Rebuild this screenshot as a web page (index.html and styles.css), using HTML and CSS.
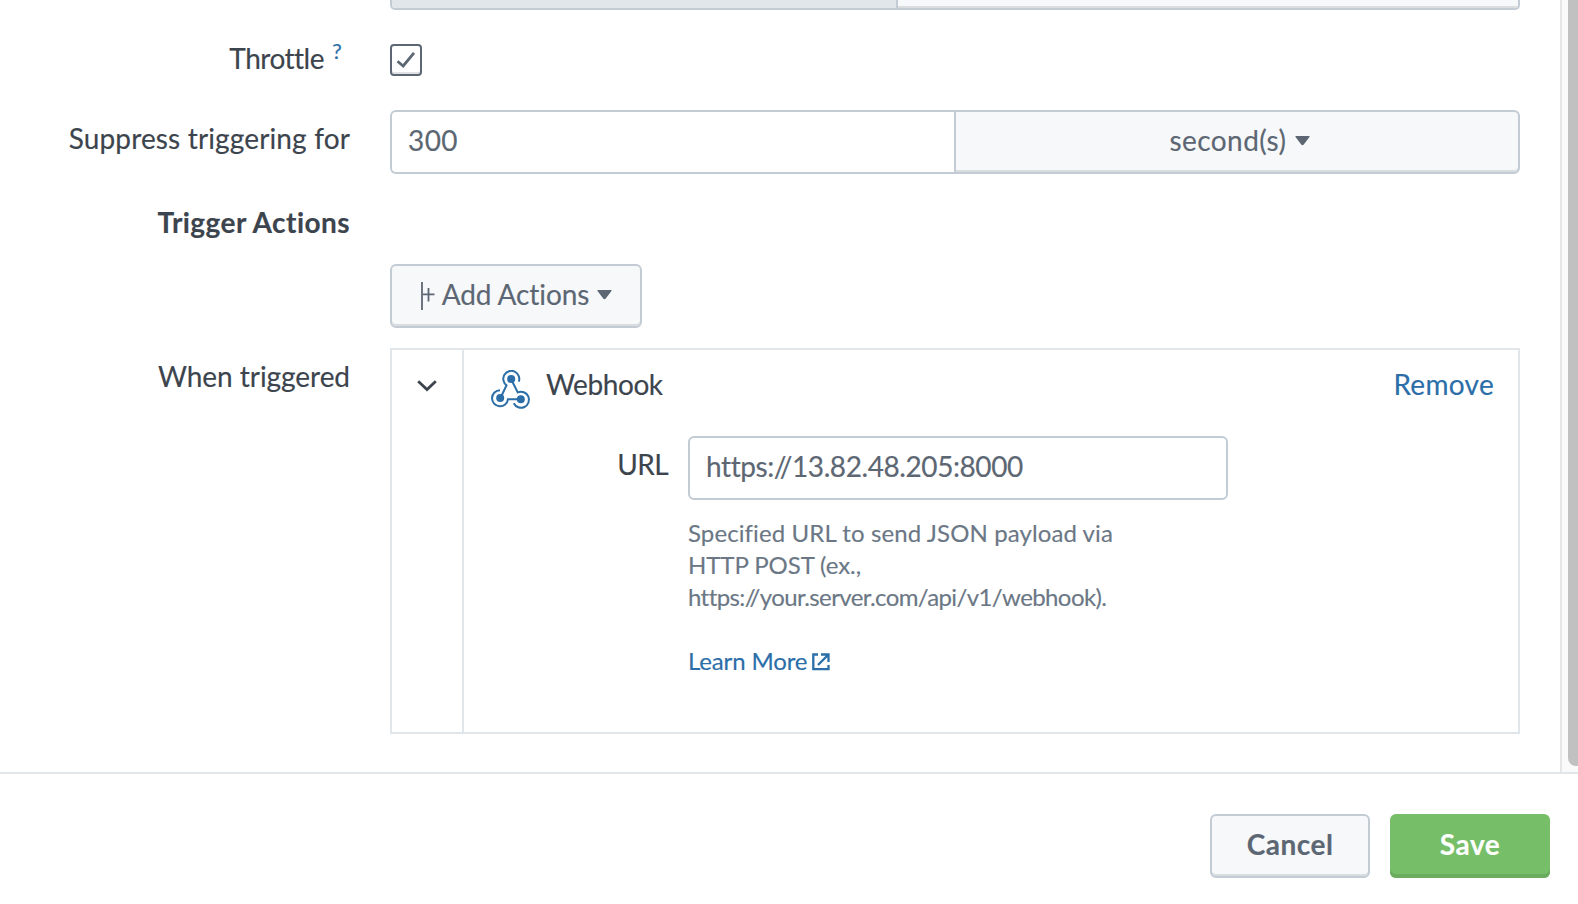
FILE: index.html
```html
<!DOCTYPE html>
<html lang="en">
<head>
<meta charset="utf-8">
<title>Save As Alert</title>
<link rel="stylesheet" href="styles.css">
</head>
<body>
<div class="dialog">
  <div class="dialog-body">
    <form class="form">
      <div class="row row-cut">
        <div class="label"></div>
        <div class="split"><div class="cell-muted"></div><div class="cell-button"></div></div>
      </div>
      <div class="row row-throttle">
        <div class="label label-help"><span class="t-throttle">Throttle</span><a class="help-mark">?</a></div>
        <div class="checkbox">
          <svg width="28" height="28" viewBox="0 0 28 28"><path d="M5.5 15.2l5.7 4.8L22 6.8" fill="none" stroke="#5c6773" stroke-width="2.8"/></svg>
        </div>
      </div>
      <div class="row">
        <div class="label"><span class="t-suppress">Suppress triggering for</span></div>
        <div class="split-input">
          <div class="input input-left"><span class="t-num">300</span></div>
          <div class="select"><span class="t-sec">second(s)</span>
            <svg class="caret" width="15" height="10" viewBox="0 0 14 10" preserveAspectRatio="none"><path d="M1 0H13Q14.300 0 13.500 1L8.200 8.600Q7 9.800 5.800 8.600L.5 1Q-.300 0 1 0Z" fill="#5c6773"/></svg>
          </div>
        </div>
      </div>
      <div class="row row-heading">
        <div class="label label-bold"><span class="t-trigger">Trigger Actions</span></div>
      </div>
      <div class="row">
        <div class="label"></div>
        <div class="button button-add">
          <svg class="add-icon" width="14" height="28" viewBox="0 0 14 28"><path d="M1 0v28M2 12.300h11.500M7.500 6v13.500" fill="none" stroke="#5c6773" stroke-width="1.800"/></svg>
          <span class="t-add">Add Actions</span>
          <svg class="caret" width="15" height="10" viewBox="0 0 14 10" preserveAspectRatio="none"><path d="M1 0H13Q14.300 0 13.500 1L8.200 8.600Q7 9.800 5.800 8.600L.5 1Q-.300 0 1 0Z" fill="#5c6773"/></svg>
        </div>
      </div>
      <div class="row">
        <div class="label"><span class="t-when">When triggered</span></div>
        <div class="panel">
          <div class="panel-toggle">
            <svg width="20" height="12" viewBox="0 0 20 12"><path d="M1.200 1.200L10 9.500l8.800-8.300" fill="none" stroke="#3c444d" stroke-width="2.800"/></svg>
          </div>
          <div class="panel-main">
            <div class="panel-head">
              <svg class="hook" width="40" height="40" viewBox="0 0 40 40">
                <g fill="none" stroke="#2b6ea8" stroke-width="2">
                  <path d="M27.800 11.600A8 8 0 1 0 15.500 15.300L9.500 28"/>
                  <path d="M9 20.300A8 8 0 1 0 17 29.200H30"/>
                  <path d="M22.800 33.200A8 8 0 1 0 26.800 22.400L20 9"/>
                </g>
                <g fill="#2b6ea8"><circle cx="20.200" cy="9" r="4"/><circle cx="9.200" cy="28" r="4"/><circle cx="29.800" cy="29.200" r="4"/></g>
              </svg>
              <span class="t-hook">Webhook</span>
              <a class="link remove">Remove</a>
            </div>
            <div class="field">
              <div class="field-label"><span class="t-url">URL</span></div>
              <div class="field-body">
                <div class="input input-url"><span class="t-addr">https://13.82.48.205:8000</span></div>
                <div class="hint">
                  <div class="h1">Specified URL to send JSON payload via</div>
                  <div class="h2">HTTP POST (ex.,</div>
                  <div class="h3">https://your.server.com/api/v1/webhook).</div>
                </div>
                <a class="link learn"><span>Learn More</span>
                  <svg width="18" height="18" viewBox="0 0 18 18"><path d="M6 1.500H1.300v14.700h15.200V12M9 1.500h7.500V9M16 2L6 12" fill="none" stroke="#2b6ea8" stroke-width="2.300"/></svg>
                </a>
              </div>
            </div>
          </div>
        </div>
      </div>
    </form>
    <div class="scrollbar"><div class="thumb"></div></div>
  </div>
  <div class="footer">
    <div class="button button-cancel"><span class="t-cancel">Cancel</span></div>
    <div class="button button-save"><span class="t-save">Save</span></div>
  </div>
</div>
</body>
</html>
```

FILE: styles.css
```css
* { box-sizing: border-box; }
body {
  margin: 0;
  background: #fff;
  color: #3c444d;
  font: 28px/36px Lato, "Liberation Sans", sans-serif;
  font-variant-ligatures: none;
  -webkit-text-stroke: .15px currentColor;
  overflow: hidden;
}
svg { display: block; flex: none; }
span { white-space: nowrap; }
.dialog { width: 1578px; height: 904px; display: flex; flex-direction: column; }
.dialog-body { display: flex; height: 772px; }
.form { width: 1560px; display: flex; flex-direction: column; gap: 20px; }
.row { display: flex; gap: 40px; align-items: flex-start; }
.row-throttle { height: 60px; }
.row-heading { height: 50px; }
.label { width: 350px; padding-top: 10px; display: flex; justify-content: flex-end; }
.label-bold { font-weight: 700; }
.row-cut { height: 10px; }
.row-cut .label { padding: 0; }
.split {
  display: flex;
  width: 1130px;
  height: 10px;
  border: 2px solid #c3cbd4;
  border-top: 0;
  border-radius: 0 0 5px 5px;
  overflow: hidden;
}
.cell-muted { width: 506px; background: #e1e6eb; border-right: 2px solid #c3cbd4; }
.cell-button { flex: 1; background: #f7f8fa; box-shadow: inset 0 -2px #d9dde0; }
.label-help { padding-right: 8px; gap: 8px; }
.help-mark { font-size: 22px; line-height: 21px; color: #2b6ea8; width: 10px; }
.checkbox {
  width: 32px;
  height: 32px;
  margin-top: 14px;
  border: 2px solid #5c6773;
  border-radius: 4px;
  box-shadow: inset 0 -2px #dfe1e3;
}
.split-input { display: flex; width: 1130px; }
.input, .select, .button {
  height: 64px;
  border: 2px solid #c3cbd4;
  border-radius: 6px;
  line-height: 36px;
  padding-top: 10px;
  color: #5c6773;
}
.input { padding-left: 16px; background: #fff; }
.input-left { width: 564px; border-right: 0; border-radius: 6px 0 0 6px; }
.select {
  display: flex;
  justify-content: center;
  gap: 9px;
  width: 566px;
  padding-left: 6px;
  border-radius: 0 6px 6px 0;
  background: #f7f8fa;
  box-shadow: inset 0 -2px #d9dde0;
}
.caret { margin-top: 14px; }
.button {
  display: flex;
  justify-content: center;
  background: #f7f8fa;
  box-shadow: inset 0 -2px #d9dde0;
}
.button-add { width: 252px; gap: 8px; padding-left: 1px; }
.button-add .add-icon { margin: 6px -1px 0 0; }
.panel { display: flex; width: 1130px; height: 386px; border: 2px solid #e1e6eb; }
.panel-toggle { width: 72px; border-right: 2px solid #e1e6eb; padding: 30px 0 0 25px; }
.panel-main { flex: 1; padding-top: 16px; }
.panel-head { display: flex; height: 34px; padding: 0 24px 0 27px; }
.hook { margin: 4px 15px 0 0; }
.link { color: #2b6ea8; }
.remove { margin-left: auto; letter-spacing: .3px; }
.field { display: flex; gap: 20px; margin-top: 36px; }
.field-label { width: 204px; padding-top: 10px; text-align: right; }
.field-body { width: 540px; }
.hint { margin-top: 17px; font-size: 24px; line-height: 32px; color: #6b7785; }
.learn { display: flex; gap: 5px; margin-top: 32px; font-size: 24px; line-height: 32px; }
.learn span { letter-spacing: -.15px; }
.learn svg { margin-top: 8px; }
.scrollbar {
  width: 18px;
  border-left: 2px solid #e6e6e6;
  background: #fafafa;
  padding-left: 6px;
  overflow: hidden;
}
.thumb { width: 16px; height: 766px; background: #c1c1c1; border-radius: 0 0 8px 8px; }
.footer {
  display: flex;
  justify-content: flex-end;
  gap: 20px;
  height: 132px;
  padding: 40px 28px 0 0;
  border-top: 2px solid #e1e6eb;
}
.button-cancel, .button-save { width: 160px; font-weight: 700; }
.button-save {
  border: 0;
  padding-top: 12px;
  background: #76be68;
  color: #fff;
  box-shadow: inset 0 -4px #6aab5e;
}
.t-throttle { letter-spacing: -.5px; }
.t-suppress { letter-spacing: .145px; }
.t-trigger { letter-spacing: .45px; }
.t-when { letter-spacing: -.05px; }
.t-num { letter-spacing: .4px; }
.t-sec { letter-spacing: .41px; }
.t-add { letter-spacing: -.09px; }
.t-hook { letter-spacing: -.4px; }
.t-url { letter-spacing: -.6px; }
.t-addr { letter-spacing: -.42px; }
.t-cancel { letter-spacing: .5px; }
.t-save { letter-spacing: .5px; }
.h1 { letter-spacing: .1px; }
.h2 { letter-spacing: -.07px; }
.h3 { letter-spacing: -.6px; }
```
